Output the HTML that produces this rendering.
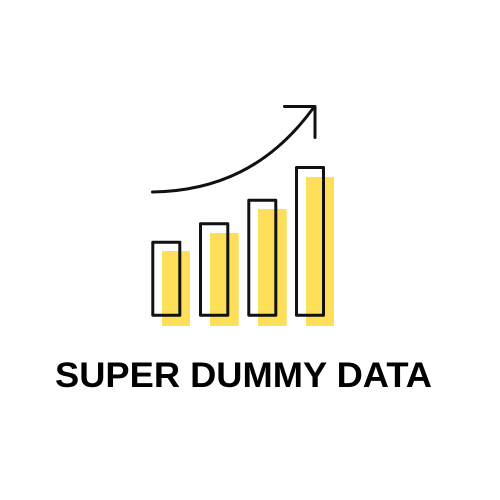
<!DOCTYPE html>
<html><head><meta charset="utf-8"><style>
html,body{margin:0;padding:0;background:#fff;width:500px;height:500px;overflow:hidden}
</style></head><body>
<svg width="500" height="500" viewBox="0 0 500 500" xmlns="http://www.w3.org/2000/svg">
<rect width="500" height="500" fill="#fff"/>
<g fill="#FFDE59">
<rect x="162" y="251" width="28" height="75"/>
<rect x="210" y="233" width="28.7" height="93"/>
<rect x="258" y="209" width="28.7" height="117"/>
<rect x="306" y="177" width="28" height="149"/>
</g>
<g fill="none" stroke="#111" stroke-width="3" stroke-linejoin="round">
<rect x="152.8" y="242.2" width="27" height="73"/>
<rect x="200.5" y="223.8" width="27.3" height="91.4"/>
<rect x="248.8" y="200.2" width="27" height="115"/>
<rect x="296.5" y="167.5" width="27" height="147.7"/>
</g>
<g fill="none" stroke="#111" stroke-width="3" stroke-linecap="round" stroke-linejoin="round">
<path d="M152.5 192 C215 191 270 168 314 107"/>
<path d="M284.5 106.5 L315 106.5 L315 137.5"/>
</g>
<text x="55" y="387" textLength="377" lengthAdjust="spacingAndGlyphs" font-family="Liberation Sans, Arial, sans-serif" font-weight="700" font-size="35" fill="#000">SUPER DUMMY DATA</text>
</svg>
</body></html>
